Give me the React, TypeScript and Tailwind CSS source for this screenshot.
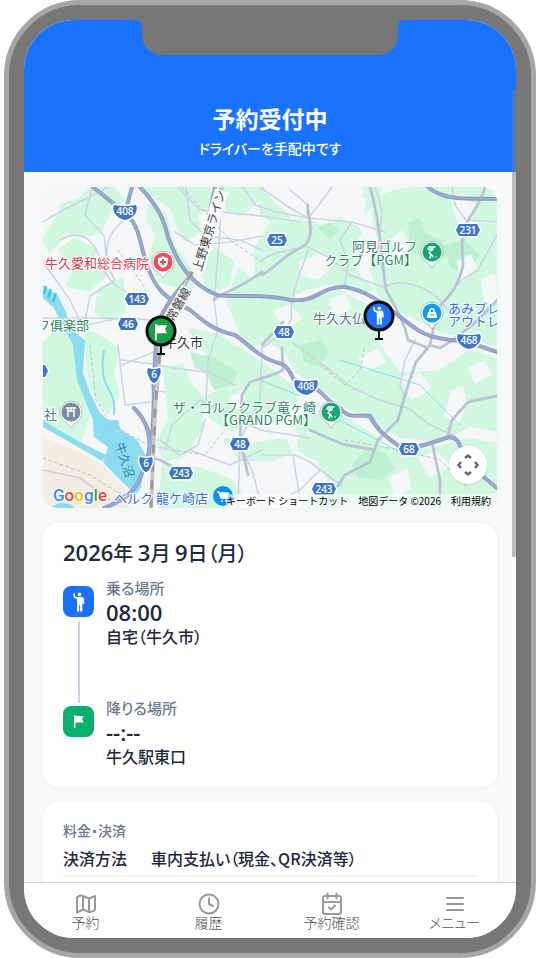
import type { ReactNode } from "react";

type Tone = "red" | "green" | "blue" | "slate" | "dark";

const toneFill: Record<Tone, string> = {
  red: "#d93a50",
  green: "#2b8763",
  blue: "#2f6fe0",
  slate: "#60728a",
  dark: "#333333",
};

// wooded / farmland areas
const greens = [
  "M43 240L60 215 62 205 80 200 88 190 112 187 122 200 108 212 100 232 80 236 66 230 50 250Z",
  "M150 205L165 215 172 245 185 262 195 280 188 290 160 280 150 258 158 235 148 220Z",
  "M142 187H208L210 205 195 215 200 230 185 240 178 225 172 208Z",
  "M222 187H262L258 200 240 215 228 210Z",
  "M200 268L215 250 232 262 228 285 210 290Z",
  "M228 300L240 270 252 282 262 262 280 250 292 262 285 282 300 292 280 300 262 318 268 340 250 345 240 330Z",
  "M60 250L75 240 95 250 90 265 105 275 88 290 68 285 75 270Z",
  "M43 345L58 330 72 330 76 372 90 410 80 440 60 432 43 420Z",
  "M86 330L104 340 118 350 112 372 118 395 108 412 92 390 88 362Z",
  "M100 290L122 280 124 310 110 320 96 312Z",
  "M165 370L182 365 190 385 204 400 200 430 184 455 164 460 158 440 170 420Z",
  "M190 330L215 335 240 350 270 370 290 385 296 400 280 420 250 418 232 430 212 418 205 400 228 385 214 362Z",
  "M262 300L300 305 340 292 372 310 378 345 400 375 440 372 470 352 497 360V430L470 425 440 440 400 436 372 420 345 405 318 385 298 372 285 350 262 335Z",
  "M270 225L300 220 330 228 345 215 360 232 350 250 358 275 372 290 350 286 330 282 300 290 275 275 258 290 256 250Z",
  "M372 200L395 192 420 187H497V345L465 335 440 330 400 310 380 295 372 270 384 250 375 225Z",
  "M260 190L275 205 290 218 285 225 262 215Z",
  "M297 418L330 410 355 425 380 440 372 460 345 470 338 508H300L330 480 318 460 300 450Z",
  "M345 455L372 445 400 452 430 450 470 440 497 445V508H345Z",
  "M164 465L200 470 230 480 240 495 215 508H160Z",
  "M225 440L250 445 285 440 290 452 270 460 240 458Z",
  "M365 187L380 187 378 200 364 212Z",
];

const darkGreens = [
  "M190 352L215 358 238 372 232 385 214 390 206 372 195 368Z",
  "M408 222L420 218 425 232 440 240 450 255 430 262 410 250Z",
  "M445 245L465 240 480 255 470 272 450 268Z",
  "M365 450L385 452 395 468 382 480 358 478 352 465Z",
  "M300 345L320 340 330 352 318 366 304 362Z",
  "M318 228L330 222 340 230 330 240Z",
];

// open ground cut out of the green
const clearings = [
  "M345 195L365 200 360 225 342 218Z",
  "M300 262L322 255 335 262 318 278 302 274Z",
  "M392 240L402 232 408 245 398 256Z",
  "M452 200L462 194 474 206 470 226 458 220Z",
  "M458 262L470 256 476 270 462 280Z",
  "M482 280L494 276 497 300 486 302Z",
  "M392 345L402 338 412 352 402 364Z",
  "M452 392L462 388 466 404 458 422 446 416Z",
  "M360 358L378 350 384 362 366 370Z",
  "M402 378L420 374 430 388 412 398Z",
  "M420 458L436 452 448 466 430 476Z",
  "M390 478L406 470 410 488 396 496Z",
  "M275 312L290 306 300 318 286 328Z",
  "M330 300L345 296 350 308 336 314Z",
  "M470 368L484 362 490 374 476 382Z",
  "M230 398L242 392 246 404 234 410Z",
];

const minorRoads = [
  "M43 222C60 210 75 205 93 195L108 187",
  "M60 240C80 228 95 240 100 260S120 290 138 298",
  "M43 262L70 300 82 326 120 318 150 320",
  "M43 318H92L140 319",
  "M92 187L85 215 104 236 108 270",
  "M138 210C115 225 104 235 107 265L115 280 90 296 84 325",
  "M120 360C150 362 175 370 208 372L235 385",
  "M118 345L125 405 150 402",
  "M120 366L178 342",
  "M186 187L190 220 205 236 240 240 262 250",
  "M220 187C222 220 218 260 214 300L218 330 208 360 206 400",
  "M175 232L195 245 230 242 262 236",
  "M178 187L200 210 262 216 300 222",
  "M243 187L255 205 276 212 308 218 330 220 352 222 385 232",
  "M262 260C280 248 300 250 306 246L312 228 308 205 290 190",
  "M260 187L290 208 308 218 318 206 332 187",
  "M308 250C300 275 288 300 292 318L284 332 262 348 260 400 240 440 238 508",
  "M306 246L330 258 350 275 385 288",
  "M352 222L340 240 348 262 345 286",
  "M375 187L382 210 378 250 384 275 386 290",
  "M385 287C400 278 425 285 440 300L455 320",
  "M452 187L455 205 466 220 497 222",
  "M497 235L478 270 462 280 440 305",
  "M292 342L330 370 352 388 385 402 408 408 430 425 455 436",
  "M205 420L198 445 180 455 160 440",
  "M165 450L172 425 200 400 260 430 310 438",
  "M262 455L295 455 310 462 342 486",
  "M190 450L230 465 262 450",
  "M293 455L300 500",
  "M404 398L400 385 405 360 415 340",
  "M320 470L300 490 280 500",
  "M240 445L252 470 262 508",
  "M497 395L470 400 458 412 447 430",
  "M150 370L152 390 165 392",
  "M43 470L80 478 110 500",
];

const midRoads = [
  "M485 187C480 210 465 215 462 240L463 265C458 290 445 300 438 308L430 345 416 362 408 385 398 420 378 440 370 462 345 475 328 500",
  "M370 187C378 215 380 240 384 275L386 290C400 315 405 325 408 340L428 348",
  "M262 275C275 268 280 258 300 248S305 215 308 205",
  "M282 348L283 370C275 375 262 378 250 382L242 395 240 440 248 475",
  "M497 300C480 320 455 340 440 348L430 345",
  "M262 345L283 322",
  "M310 430L342 444 375 450",
  "M432 442L440 480V508",
  "M153 458C170 462 178 472 185 476",
  "M497 396L468 402 452 420 448 436",
  "M262 272C230 295 225 290 214 300",
];

const mainRoads = [
  "M93 187L125 213C140 225 140 245 146 262C155 290 165 298 190 310C205 322 212 330 235 335C250 345 258 358 282 364C296 372 288 384 306 386C322 387 326 402 340 408C350 420 356 414 370 416C378 432 388 438 400 447C415 450 432 442 450 437C462 439 458 448 468 464L497 488",
  "M140 187C162 210 165 225 168 237C178 265 192 285 217 295C240 298 262 293 290 300C318 303 320 286 345 287C375 292 395 315 415 328C430 340 455 340 468 342L497 352",
  "M132 187L125 213",
  "M215 187C210 215 203 242 190 276C180 290 162 305 157 330L154 375C154 430 152 448 143 470C138 490 125 500 104 508",
  "M134 408C148 422 152 435 148 464",
  "M428 187C445 202 470 198 497 199",
];

const hexShields = [
  { x: 277, y: 240, label: "25" },
  { x: 137, y: 299, label: "143" },
  { x: 128, y: 324, label: "46" },
  { x: 284, y: 332, label: "48" },
  { x: 468, y: 230, label: "231" },
  { x: 240, y: 444, label: "48" },
  { x: 181, y: 473, label: "243" },
  { x: 324, y: 489, label: "243" },
  { x: 409, y: 449, label: "68" },
  { x: 38, y: 371, label: "" },
];

const routeShields = [
  { x: 125, y: 212, label: "408" },
  { x: 306, y: 387, label: "408" },
  { x: 469, y: 341, label: "468" },
  { x: 154, y: 375, label: "6" },
  { x: 146, y: 464, label: "6" },
];

function HexShield({ x, y, label }: { x: number; y: number; label: string }) {
  const w = label.length > 2 ? 12 : 10;
  return (
    <g transform={`translate(${x} ${y})`}>
      <path
        d={`M${-w} 0L${3 - w} -6H${w - 3}L${w} 0 ${w - 3} 6H${3 - w}Z`}
        fill="#3d76c8"
        stroke="#fff"
        strokeWidth="3"
        strokeLinejoin="round"
        paintOrder="stroke"
      />
      <text y="4" textAnchor="middle" fontSize="10" fontWeight="600" fill="#fff" fontFamily="Open Sans">
        {label}
      </text>
    </g>
  );
}

function RouteShield({ x, y, label }: { x: number; y: number; label: string }) {
  const w = label.length > 1 ? 12 : 7;
  return (
    <g transform={`translate(${x} ${y})`}>
      <path
        d={`M${1 - w} -7Q0 -5 ${w - 1} -7Q${w + 1} -3 ${w - 2} 2Q${w / 2} 7 0 8Q${-w / 2} 7 ${2 - w} 2Q${-w - 1} -3 ${1 - w} -7Z`}
        fill="#3d76c8"
        stroke="#fff"
        strokeWidth="3"
        strokeLinejoin="round"
        paintOrder="stroke"
      />
      <text y="3" textAnchor="middle" fontSize="10" fontWeight="600" fill="#fff" fontFamily="Open Sans">
        {label}
      </text>
    </g>
  );
}

function Poi({ x, y, color, children }: { x: number; y: number; color: string; children: ReactNode }) {
  return (
    <g transform={`translate(${x} ${y})`}>
      <path
        d="M0 16Q-2 13 -5 10A11 11 0 1 1 5 10Q2 13 0 16Z"
        fill="#fff"
        stroke="#7f8a96"
        strokeOpacity=".5"
        strokeWidth="1"
      />
      <circle r="9.500" fill={color} />
      {children}
    </g>
  );
}

function Label({
  x,
  y,
  tone,
  anchor = "end",
  children,
}: {
  x: number;
  y: number;
  tone: Tone;
  anchor?: "start" | "middle" | "end";
  children: string;
}) {
  return (
    <text
      x={x}
      y={y}
      textAnchor={anchor}
      fontSize="13"
      fill={toneFill[tone]}
      stroke="#fff"
      strokeWidth="2"
      strokeLinejoin="round"
      paintOrder="stroke"
    >
      {children}
    </text>
  );
}

const golfer = (
  <g fill="none" stroke="#fff" strokeWidth="1.400" strokeLinecap="round" strokeLinejoin="round">
    <path d="M3 -5H-3L-4 -3 0 -2M-1 -2L-3 1 -1 2 -2 6M-1 2L1 5" />
    <circle cx="0" cy="-3" r="1" fill="#fff" />
    <path d="M4 5h.1" />
  </g>
);

function PersonShape() {
  return (
    <g fill="#fff">
      <circle cx="6.600" cy="2.300" r="1.900" />
      <path d="M.2 1.200L1.700 1 2.200 4.300 4.300 5H8.900Q10.800 5.200 11 7L11.300 11.800Q10.500 12.800 9.700 11.900L9.300 8.500V19.600H7.100V13.200H6.200V19.600H4V7.200L1.500 6Q.6 5.500 .5 4.500Z" />
    </g>
  );
}

function FlagShape() {
  return <path d="M0 0H1.400V1H9.600L8 4.200 9.600 7.400H1.400V13H0Z" fill="#fff" />;
}

function RouteMap() {
  return (
    <svg
      viewBox="43 187 454 321"
      preserveAspectRatio="xMidYMid slice"
      className="block h-[321px] w-full font-['Noto_Sans_CJK_JP',sans-serif]"
      role="img"
      aria-label="地図"
    >
      <rect x="43" y="187" width="454" height="321" fill="#f5f6f7" />
      <g fill="#d0f8e1" stroke="#d0f8e1" strokeWidth="4" strokeLinejoin="round">
        {greens.map((d) => (
          <path key={d} d={d} />
        ))}
      </g>
      <g fill="#bdf0d1">
        {darkGreens.map((d) => (
          <path key={d} d={d} />
        ))}
      </g>
      <g fill="#f5f6f7" stroke="#f5f6f7" strokeWidth="3" strokeLinejoin="round">
        {clearings.map((d) => (
          <path key={d} d={d} />
        ))}
      </g>

      <path d="M43 437L80 452 103 465 128 492 130 508H43Z" fill="#f3eee3" />
      <g fill="#8adcf0">
        <path d="M43 285L58 296 66 312 72 330 85 340 83 373 90 393 100 413 108 420 118 420 121 430 137 440 146 456 141 487 136 495 120 480 103 462 108 447 94 437 93 420 77 380 73 345 62 325 54 308 43 298Z" />
        <path d="M43 420Q70 438 106 455L102 461Q75 445 43 427Z" />
        <path d="M50 508Q60 500 72 505L74 508Z" />
      </g>
      <g fill="none" stroke="#8adcf0">
        <path d="M114 415Q116 400 108 388T104 350" strokeWidth="2" />
        <path d="M260 380L300 396M330 415L400 452M340 360L420 385L460 425" strokeWidth="1" />
        <path d="M44 294L46 286M48 298L51 289M53 302L56 293" stroke="#3dbcdc" strokeWidth="2" />
      </g>

      <g fill="none" strokeLinecap="round" strokeLinejoin="round">
        <g stroke="#cdd4e1" strokeWidth="1.600">
          {minorRoads.map((d) => (
            <path key={d} d={d} />
          ))}
        </g>
        <g stroke="#b9c3d4" strokeWidth="2.800">
          {midRoads.map((d) => (
            <path key={d} d={d} />
          ))}
        </g>
        <g stroke="#8b9cc3" strokeWidth="4">
          {mainRoads.map((d) => (
            <path key={d} d={d} />
          ))}
        </g>
        <g stroke="#9aaad0" strokeWidth="2">
          {mainRoads.map((d) => (
            <path key={d} d={d} />
          ))}
        </g>
        <g stroke="#b9c2c2" strokeWidth="1" strokeDasharray="3 3">
          <path d="M118 250L140 280 150 300M182 187L230 240 262 262" />
          <path d="M90 345L96 400 112 425 150 446 205 455 225 430" />
          <path d="M320 365L345 385 360 370 365 345M345 440L400 450 440 460 470 490" />
          <path d="M43 458L90 475 130 500" />
        </g>
      </g>

      <g fill="none">
        <path d="M222 187L192 272L165 322L160 350L155 410L151 508" stroke="#c8c8c8" strokeWidth="4" />
        <path d="M192 272L165 322L160 350L155 410L151 508" stroke="#999" strokeWidth="3" strokeDasharray="9 9" />
      </g>

      {hexShields.map((s) => (
        <HexShield key={`${s.x}-${s.y}`} {...s} />
      ))}
      {routeShields.map((s) => (
        <RouteShield key={`${s.x}-${s.y}`} {...s} />
      ))}

      <g transform="translate(201 272) rotate(-73)">
        <rect x="-2" y="-11" width="86" height="14" fill="#f7f7f7" />
        <text fontSize="12" fill="#444">
          上野東京ライン
        </text>
      </g>
      <g transform="translate(173 322) rotate(-60)">
        <rect x="-1" y="-11" width="38" height="14" fill="#f7f7f7" />
        <text fontSize="12" fill="#444">
          常磐線
        </text>
      </g>
      <text transform="translate(115 444) rotate(72)" fontSize="12" fill="#2a8a9c">
        牛久沼
      </text>

      <Label x={149} y={268} tone="red">牛久愛和総合病院</Label>
      <Label x={89} y={330} tone="green">フ俱楽部</Label>
      <Label x={57} y={419} tone="slate">社</Label>
      <Label x={417} y={251} tone="green">阿見ゴルフ</Label>
      <Label x={417} y={265} tone="green">クラブ【PGM】</Label>
      <Label x={313} y={323} tone="slate" anchor="start">牛久大仏</Label>
      <Label x={448} y={313} tone="blue" anchor="start">あみプレ</Label>
      <Label x={448} y={326} tone="blue" anchor="start">アウトレ</Label>
      <Label x={316} y={412} tone="green">ザ・ゴルフクラブ竜ヶ崎</Label>
      <Label x={316} y={425} tone="green">【GRAND PGM】</Label>
      <Label x={164} y={347} tone="dark" anchor="start">牛久市</Label>
      <Label x={208} y={503} tone="blue">ベルク 龍ケ崎店</Label>

      <Poi x={163} y={262} color="#f2495c">
        <path d="M-5 -4Q-2 -4 0 -6Q2 -4 5 -4V1Q4 5 0 6Q-4 5 -5 1Z" fill="#fff" />
        <path d="M0 -3V3M-3 0H3" stroke="#f2495c" strokeWidth="2" />
      </Poi>
      <Poi x={432} y={252} color="#17a673">{golfer}</Poi>
      <Poi x={331} y={412} color="#17a673">{golfer}</Poi>
      <Poi x={432} y={313} color="#0a9df2">
        <path d="M-4 -1H4L5 5H-5Z" fill="#fff" />
        <path d="M-2 -1V-3Q0 -6 2 -3V-1" fill="none" stroke="#fff" strokeWidth="1.500" />
        <path d="M-2 1Q0 4 2 1" fill="none" stroke="#0a9df2" />
      </Poi>
      <Poi x={71} y={412} color="#75909f">
        <path d="M-5 -4H5M-4 -1H4M-3 -4V5M3 -4V5M0 -4V-1" stroke="#fff" strokeWidth="1.500" fill="none" />
      </Poi>
      <g transform="translate(223 496)">
        <circle r="10" fill="#0a8ff2" />
        <path d="M-6 -4H-4L-2 2H4L5 -3H-4" fill="#fff" stroke="#fff" strokeWidth="1.500" />
        <circle cx="-1" cy="5" r="1" fill="#fff" />
        <circle cx="3" cy="5" r="1" fill="#fff" />
      </g>

      {/* drop-off marker */}
      <path d="M161 345V354M157 354H165" stroke="#111" strokeWidth="2" />
      <circle cx="161" cy="331" r="14" fill="#18a049" stroke="#0a0a0a" strokeWidth="3" />
      <g transform="translate(155 324) scale(1.250)">
        <FlagShape />
      </g>

      {/* pick-up marker */}
      <path d="M379 330V339M375 339H383" stroke="#111" strokeWidth="2" />
      <circle cx="379" cy="316" r="14" fill="#1a73ff" stroke="#0a0a0a" strokeWidth="3" />
      <g transform="translate(373 306) scale(.95)">
        <PersonShape />
      </g>

      <text
        x="53"
        y="501"
        fontSize="17"
        fontWeight="500"
        fontFamily="Roboto"
        stroke="#fff"
        strokeWidth="2"
        paintOrder="stroke"
      >
        <tspan fill="#4285f4">G</tspan>
        <tspan fill="#ea4335">o</tspan>
        <tspan fill="#fbbc04">o</tspan>
        <tspan fill="#4285f4">g</tspan>
        <tspan fill="#34a853">l</tspan>
        <tspan fill="#ea4335">e</tspan>
      </text>
    </svg>
  );
}

function MapCard() {
  return (
    <section className="relative overflow-hidden rounded-2xl shadow-[0_0_8px_#0f172a0d] [font-feature-settings:normal]">
      <RouteMap />
      <button
        type="button"
        aria-label="地図のカメラ コントロール"
        className="absolute right-[10px] bottom-6 flex size-[38px] items-center justify-center rounded-full bg-white shadow"
      >
        <svg viewBox="0 0 24 24" className="size-6" fill="none" stroke="#666" strokeWidth="2.400">
          <path d="M9 5L12 2.500 15 5M9 19L12 21.500 15 19M5 9L2.500 12 5 15M19 9L21.500 12 19 15" />
        </svg>
      </button>
      <div className="absolute right-0 bottom-0 flex h-[14px] items-center gap-[10px] bg-white/60 pr-[6px] text-[10px] leading-[14px] whitespace-nowrap text-black">
        <button type="button">キーボード ショートカット</button>
        <span>地図データ ©2026</span>
        <a href="#terms">利用規約</a>
      </div>
    </section>
  );
}

function Num({ children }: { children: string }) {
  return (
    <span className="font-['Open_Sans','Noto_Sans_CJK_JP',sans-serif] text-[22px] leading-none font-semibold">
      {children}
    </span>
  );
}

function Stop({ icon, label, time, place }: { icon: ReactNode; label: string; time: string; place: string }) {
  return (
    <div className="flex gap-3">
      {icon}
      <div>
        <p className="text-[15px] leading-[22px] font-medium text-[#6b7a8f]">{label}</p>
        <p className="flex h-[26px] items-center">
          <Num>{time}</Num>
        </p>
        <p className="text-base leading-[22px] font-medium">{place}</p>
      </div>
    </div>
  );
}

function TripCard() {
  return (
    <section className="rounded-2xl bg-white px-5 pt-[18px] pb-5 text-[#1e293b] shadow-[0_0_8px_#0f172a0d]">
      <h2 className="h-6 text-xl leading-6 font-medium">
        <Num>2026</Num>年 <Num>3</Num>月 <Num>9</Num>日（月）
      </h2>
      <div className="mt-3 grid grid-rows-[120px_auto]">
        <Stop
          label="乗る場所"
          time="08:00"
          place="自宅（牛久市）"
          icon={
            <div className="-mb-[6px] flex flex-col items-center pt-[9px]">
              <span className="flex size-[31px] items-center justify-center rounded-lg bg-[#1a6fff]">
                <svg viewBox="0 0 12 20" className="h-5 w-3">
                  <PersonShape />
                </svg>
              </span>
              <span className="mt-[5px] w-[2px] flex-1 bg-[#cbd5e1]" />
            </div>
          }
        />
        <Stop
          label="降りる場所"
          time="--:--"
          place="牛久駅東口"
          icon={
            <div className="pt-[9px]">
              <span className="flex size-[31px] items-center justify-center rounded-lg bg-[#07b06c]">
                <svg viewBox="0 0 10 13" className="h-[13px] w-[10px]">
                  <FlagShape />
                </svg>
              </span>
            </div>
          }
        />
      </div>
    </section>
  );
}

function PaymentCard() {
  return (
    <section className="rounded-2xl bg-white px-5 py-[18px] text-[#1e293b] shadow-[0_0_8px_#0f172a0d]">
      <h2 className="text-sm leading-5 font-medium text-[#6b7a8f]">料金・決済</h2>
      <dl className="mt-[6px] flex gap-6 border-b-2 border-[#f1f5f9] pb-[5px] text-base leading-6 font-medium">
        <dt>決済方法</dt>
        <dd>車内支払い（現金、QR決済等）</dd>
      </dl>
    </section>
  );
}

const tabs = [
  {
    label: "予約",
    icon: <path d="M3 5.500Q6 2.500 9 4L15 6.500 21 4V17.500Q18 20.500 15 20L9 17.500 3 20.500ZM9 4V17.500M15 6.500V20" />,
  },
  {
    label: "履歴",
    icon: (
      <>
        <circle cx="12" cy="12" r="9.500" />
        <path d="M12 6.500v5.500l4 2" />
      </>
    ),
  },
  {
    label: "予約確認",
    icon: (
      <>
        <rect x="3" y="4" width="18" height="18" rx="2" />
        <path d="M3 10h18M7.500 1.500v5M16.500 1.500v5M9 15.500l2 2 4-4" />
      </>
    ),
  },
  { label: "メニュー", icon: <path d="M4 6h16M4 12h16M4 18h16" /> },
];

function TabBar() {
  return (
    <nav className="grid shrink-0 grid-cols-4 border-t border-[#d0d0d0] bg-white pt-[9px] pb-[10px]">
      {tabs.map((tab) => (
        <button key={tab.label} type="button" className="flex flex-col items-center text-[#555]">
          <svg
            viewBox="0 0 24 24"
            className="size-6 text-[#999]"
            fill="none"
            stroke="currentColor"
            strokeWidth="2"
            strokeLinecap="round"
            strokeLinejoin="round"
          >
            {tab.icon}
          </svg>
          <span className="text-sm leading-3 font-light">{tab.label}</span>
        </button>
      ))}
    </nav>
  );
}

export default function App() {
  return (
    <div className="h-dvh bg-white px-1 font-['Noto_Sans_CJK_JP',sans-serif] [font-feature-settings:'palt']">
      <div className="h-full rounded-[76px] border-[5px] border-[#a6a6a6] bg-[#777] p-[15px]">
        <div className="relative flex h-full flex-col overflow-hidden rounded-[50px] bg-[#f8fafc]">
          <svg
            viewBox="0 0 268 35"
            className="absolute top-0 left-1/2 h-[35px] w-[268px] -translate-x-1/2"
            aria-hidden="true"
          >
            <path d="M0 0Q6 0 6 6V15A20 20 0 0 0 26 35H242A20 20 0 0 0 262 15V6Q262 0 268 0Z" fill="#777" />
          </svg>
          <header className="shrink-0 bg-[#1a73ff] pt-20 pb-3 text-center text-white">
            <h1 className="text-[23px] leading-9 font-bold">予約受付中</h1>
            <p className="text-sm leading-6 font-medium">ドライバーを手配中です</p>
          </header>
          <main className="flex min-h-0 flex-1 flex-col gap-[15px] overflow-hidden px-[19px] pt-[15px] *:shrink-0">
            <MapCard />
            <TripCard />
            <PaymentCard />
          </main>
          <TabBar />
          {/* scroll thumb */}
          <div className="absolute top-[70px] right-0 h-[467px] w-1 bg-[#808080]/50" />
        </div>
      </div>
    </div>
  );
}
